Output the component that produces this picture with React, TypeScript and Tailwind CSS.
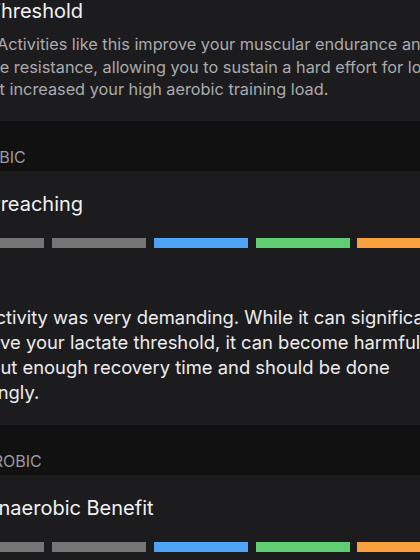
import React from "react";

const segments = ["#767676", "#767676", "#767676", "#4fa3f7", "#5fce72", "#f9a03f", "#ef4b4b"];

function EffectBar() {
  return (
    <div className="flex gap-[7.8px] -ml-[151.6px] mt-[22px]">
      {segments.map((c, i) => (
        <div key={i} className="h-[10px] w-[94px] shrink-0" style={{ backgroundColor: c }} />
      ))}
    </div>
  );
}

function SectionHeader({ label, offset }: { label: string; offset: string }) {
  return (
    <div className="bg-[#111112] h-[50px] flex items-end pb-[4px]">
      <div className={`whitespace-nowrap text-[16px] leading-[20px] text-[#9a9a9e] ${offset}`}>{label}</div>
    </div>
  );
}

export default function App() {
  return (
    <div
      className="w-[420px] h-[560px] overflow-hidden bg-[#1c1c1e] text-[#f2f2f2]"
      style={{ fontFamily: "Inter, 'Noto Sans', sans-serif" }}
    >
      <div className="w-[760px]">
        {/* Lactate threshold card */}
        <div className="bg-[#1c1c1e] pb-[20px]">
          <div className="whitespace-nowrap text-[20px] leading-[24px] -mt-[1px] -ml-[12px]">Threshold</div>
          <div className="mt-[10px] text-[16.3px] leading-[22.5px] text-[#ababae]">
            <div className="whitespace-nowrap -ml-[3px]">Activities like this improve your muscular endurance and</div>
            <div className="whitespace-nowrap -ml-[44px]">fatigue resistance, allowing you to sustain a hard effort for longer.</div>
            <div className="whitespace-nowrap -ml-[5px]">It increased your high aerobic training load.</div>
          </div>
        </div>

        <SectionHeader label="AEROBIC" offset="-ml-[44px]" />

        {/* Aerobic card */}
        <div className="bg-[#1c1c1e] pt-[21px] pb-[20px]">
          <div className="whitespace-nowrap text-[20px] leading-[24px] -ml-[45px]">Overreaching</div>
          <EffectBar />
          <div className="mt-[57px] text-[18.4px] leading-[25px] text-[#ececee]">
            <div className="whitespace-nowrap -ml-[57px]">This activity was very demanding. While it can significantly</div>
            <div className="whitespace-nowrap -ml-[49px]">improve your lactate threshold, it can become harmful</div>
            <div className="whitespace-nowrap -ml-[47px]">without enough recovery time and should be done</div>
            <div className="whitespace-nowrap -ml-[67px]">accordingly.</div>
          </div>
        </div>

        <SectionHeader label="ANAEROBIC" offset="-ml-[51px]" />

        {/* Anaerobic card */}
        <div className="bg-[#1c1c1e] pt-[21px] pb-[20px]">
          <div className="whitespace-nowrap text-[20px] leading-[24px] -ml-[48px]">No Anaerobic Benefit</div>
          <EffectBar />
        </div>
      </div>
    </div>
  );
}
